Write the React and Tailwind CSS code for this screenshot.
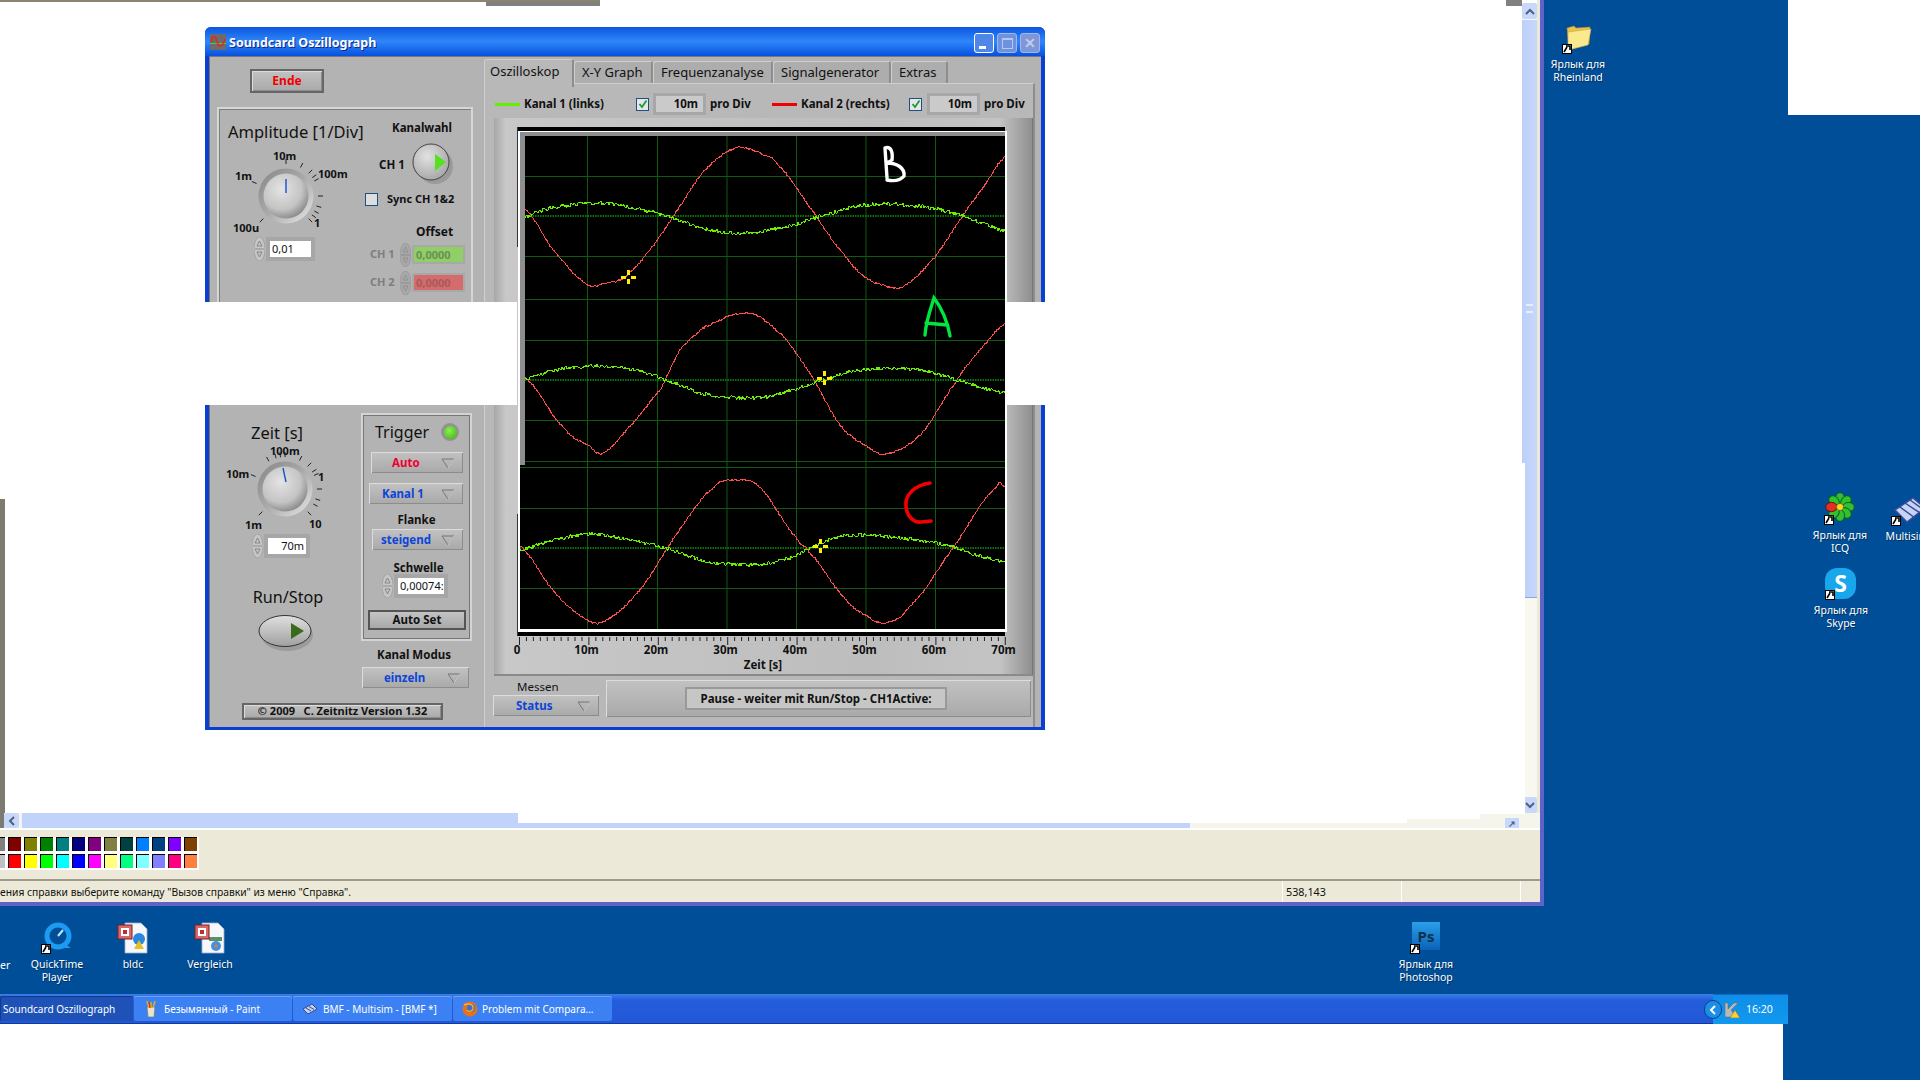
// Soundcard Oszillograph on the XP desktop, pasted over Paint
import React from "react";

const PANEL = "bg-[#b3b3b3]";
const RAISED =
  "bg-gradient-to-b from-[#c2c2c2] to-[#a9a9a9] shadow-[inset_1px_1px_0_#dcdcdc,inset_-1px_-1px_0_#8c8c8c]";

// small seeded noise so the traces keep the same shape on every load
const noise = (i) => {
  const v = Math.sin(i * 12.9898 + 4.1) * 43758.5453;
  return v - Math.floor(v) - 0.5;
};

const buildTrace = (anchors, amount, seed) => {
  const pts = [];
  for (let s = 0; s < anchors.length - 1; s++) {
    const p0 = anchors[Math.max(s - 1, 0)];
    const p1 = anchors[s];
    const p2 = anchors[s + 1];
    const p3 = anchors[Math.min(s + 2, anchors.length - 1)];
    const steps = Math.max(2, Math.round(p2[0] - p1[0]));
    for (let k = 0; k < steps; k++) {
      const t = k / steps;
      const t2 = t * t;
      const t3 = t2 * t;
      const x = p1[0] + (p2[0] - p1[0]) * t;
      const y =
        0.5 *
        (2 * p1[1] +
          (p2[1] - p0[1]) * t +
          (2 * p0[1] - 5 * p1[1] + 4 * p2[1] - p3[1]) * t2 +
          (3 * p1[1] - p0[1] - 3 * p2[1] + p3[1]) * t3);
      const n = noise(seed + pts.length) * amount;
      pts.push(`${x.toFixed(1)},${(y + n).toFixed(1)}`);
    }
  }
  const last = anchors[anchors.length - 1];
  pts.push(`${last[0]},${last[1]}`);
  return pts.join(" ");
};

const TRACES = [
  {
    red: [[525, 209], [553, 250], [587, 284], [602, 284], [625, 277], [650, 250], [673, 216], [705, 170], [736, 148], [760, 153], [778, 165], [816, 215], [840, 250], [865, 277], [891, 287], [905, 285], [935, 257], [962, 217], [985, 185], [1005, 157]],
    green: [[525, 217], [545, 209], [596, 203], [640, 209], [669, 217], [705, 229], [747, 233], [790, 226], [818, 217], [850, 208], [880, 204], [925, 207], [962, 215], [985, 224], [1005, 231]],
  },
  {
    red: [[525, 378], [564, 428], [590, 446], [602, 453], [629, 427], [662, 387], [680, 350], [705, 327], [749, 313], [785, 338], [814, 380], [840, 425], [865, 445], [885, 454], [920, 435], [956, 382], [980, 350], [1005, 324]],
    green: [[525, 379], [560, 369], [605, 366], [640, 371], [662, 379], [705, 394], [756, 398], [790, 391], [816, 382], [855, 371], [898, 368], [930, 372], [953, 379], [980, 387], [1005, 393]],
  },
  {
    red: [[520, 546], [553, 590], [580, 615], [602, 622], [640, 590], [676, 535], [713, 488], [738, 480], [760, 488], [796, 537], [809, 552], [844, 597], [865, 615], [885, 623], [909, 607], [953, 548], [996, 488], [1005, 486]],
    green: [[520, 550], [550, 541], [589, 534], [630, 540], [665, 548], [705, 561], [756, 565], [790, 558], [811, 548], [835, 538], [855, 535], [891, 537], [925, 541], [953, 547], [980, 556], [1005, 562]],
  },
];

const GRID_X = [587, 657, 726.5, 796, 865.5, 935];
const GRID_Y = [176, 256, 299, 340, 420, 461, 467, 508, 588];
const CENTER_Y = [216, 380, 548];
const AXIS = ["0", "10m", "20m", "30m", "40m", "50m", "60m", "70m"];

const Cursor = ({ x, y }) => (
  <g fill="#ffee00">
    <rect x={x - 1} y={y - 7} width="3" height="5" />
    <rect x={x - 1} y={y + 2} width="3" height="5" />
    <rect x={x - 7} y={y - 1} width="5" height="3" />
    <rect x={x + 3} y={y - 1} width="5" height="3" />
  </g>
);

const Plot = () => {
  const ticks = [];
  for (let i = 0; i <= 70; i++) ticks.push(i);
  return (
    <svg viewBox="510 127 520 545" className="w-[520px] h-[545px] block">
      <rect x="518" y="127" width="487" height="509" fill="#000" />
      <rect x="517" y="127" width="1" height="120" fill="#333" />
      <rect x="517" y="514" width="1" height="122" fill="#333" />
      <rect x="518" y="131" width="487" height="1" fill="#fff" />
      <rect x="518" y="131" width="2" height="501" fill="#fff" />
      <rect x="1005" y="131" width="2" height="501" fill="#fff" />
      <rect x="518" y="629" width="489" height="3" fill="#fff" />
      <rect x="520" y="132" width="485" height="4" fill="#8e8e8e" />
      <rect x="520" y="132" width="5" height="333" fill="#8e8e8e" />
      <rect x="520" y="133" width="2" height="2" fill="#5b8fe6" />
      {GRID_X.map((x) => (
        <rect key={x} x={x} y="136" width="1" height="493" fill="#0f5c0f" />
      ))}
      {GRID_Y.map((y) => (
        <rect key={y} x={y > 465 ? 520 : 525} y={y} width={y > 465 ? 485 : 480} height="1" fill="#0f5c0f" />
      ))}
      {CENTER_Y.map((y, i) => (
        <line key={y} x1={i == 2 ? 520 : 525} x2="1005" y1={y} y2={y} stroke="#0b9a0b" strokeWidth="1.5" strokeDasharray="1.5 1" />
      ))}
      {TRACES.map((t, i) => (
        <g key={i} fill="none" shapeRendering="crispEdges">
          <polyline points={buildTrace(t.red, 1.9, 100 + i * 700)} stroke="#ff4d4d" strokeWidth="1" />
          <polyline points={buildTrace(t.green, 3.6, 3000 + i * 700)} stroke="#6cf000" strokeWidth="1" />
        </g>
      ))}
      <Cursor x={628} y={277} />
      <Cursor x={824} y={378} />
      <Cursor x={820} y={546} />
      {/* hand drawn letters */}
      <path d="M885 148 L887 178 M885 148 C891 146 893 152 892 160 C888 163 887 162 887 163 C897 163 905 168 904 176 C900 181 892 181 887 180" fill="none" stroke="#fff" strokeWidth="3.4" strokeLinecap="round" />
      <path d="M925 335 C926 320 932 305 934 298 C941 307 948 322 950 336 M926 323 L947 325" fill="none" stroke="#00e640" strokeWidth="3.4" strokeLinecap="round" />
      <path d="M930 483 C915 485 905 495 906 505 C906 516 914 523 921 522 L931 521" fill="none" stroke="#f00000" strokeWidth="3.6" strokeLinecap="round" />
      {/* axis */}
      {ticks.map((i) => (
        <rect key={i} x={519 + i * 6.94} y="637" width="1" height={i % 10 == 0 ? 8 : 4} fill="#222" />
      ))}
      {AXIS.map((t, i) => (
        <text key={t} x={i == 0 ? 517 : 517 + i * 69.5} y="654" textAnchor="middle" fontSize="11.5" fontWeight="700" fill="#111" fontFamily="Noto Sans, sans-serif">
          {t}
        </text>
      ))}
      <text x="763" y="669" textAnchor="middle" fontSize="11.5" fontWeight="700" fill="#111" fontFamily="Noto Sans, sans-serif">
        Zeit [s]
      </text>
    </svg>
  );
};

// dial with ticks; pointer given relative to the centre
const Knob = ({ ticks, pointer, id }) => (
  <svg viewBox="-42 -42 84 84" className="w-[84px] h-[84px] block">
    <defs>
      <radialGradient id={id} cx="0.4" cy="0.35" r="0.75">
        <stop offset="0" stopColor="#e4e4e4" />
        <stop offset="0.6" stopColor="#c4c4c4" />
        <stop offset="1" stopColor="#777" />
      </radialGradient>
      <linearGradient id={id + "r"} x1="0" y1="0" x2="1" y2="1">
        <stop offset="0" stopColor="#868686" />
        <stop offset="0.5" stopColor="#aaa" />
        <stop offset="1" stopColor="#e8e8e8" />
      </linearGradient>
    </defs>
    {ticks.map((a) => {
      const r = (a * Math.PI) / 180;
      return (
        <line key={a} x1={Math.sin(r) * 32} y1={-Math.cos(r) * 32} x2={Math.sin(r) * 37} y2={-Math.cos(r) * 37} stroke="#222" strokeWidth="1" />
      );
    })}
    <circle r="27.5" fill={`url(#${id}r)`} />
    <circle r="22.5" fill={`url(#${id})`} />
    <line x1={pointer[0]} y1={pointer[1]} x2={pointer[2]} y2={pointer[3]} stroke="#1a4fd0" strokeWidth="1.4" />
  </svg>
);

const Spinner = ({ dim }) => (
  <svg viewBox="0 0 11 24" className="w-[11px] h-[24px] shrink-0">
    <ellipse cx="5.5" cy="12" rx="5.5" ry="12" fill={dim ? "#a8a8a8" : "#c6c6c6"} stroke="#929292" strokeWidth="0.6" />
    <line x1="1" y1="12" x2="10" y2="12" stroke="#8d8d8d" />
    <path d="M5.5 4 L8 9 L3 9 Z M5.5 20 L8 15 L3 15 Z" fill="none" stroke={dim ? "#8b8b8b" : "#777"} strokeWidth="0.8" />
  </svg>
);

const Numeric = ({ value, w, align, bg = "bg-white", text = "text-[#111]" }) => (
  <div className="flex items-center">
    <Spinner />
    <div className="ml-px p-[4px] bg-[#a6a6a6]">
      <div className={`${w} h-[16px] ${bg} ${text} ${align} text-[11px] leading-[16px] px-[2px] overflow-hidden whitespace-nowrap`}>
        {value}
      </div>
    </div>
  </div>
);

const OffsetRow = ({ label, bg, text }) => (
  <div className="flex items-center h-[24px]">
    <span className="w-[30px] ml-[5px] text-[#7e7e7e] font-bold text-[11px]">{label}</span>
    <Spinner dim />
    <div className="ml-px p-[2px] bg-[#a8a8a8]">
      <div className={`w-[49px] h-[15px] ${bg} ${text} font-bold text-[11px] leading-[15px] px-[2px]`}>0,0000</div>
    </div>
  </div>
);

const Combo = ({ label, color, w, ml, pad = "pl-[13px]", center }) => (
  <div className={`${w} ${ml} h-[21px] ${RAISED} flex items-center ${pad} relative`}>
    <span className={`${color} font-bold text-[11.5px] ${center}`}>{label}</span>
    <svg viewBox="0 0 14 11" className="absolute right-[8px] top-[6px] w-[14px] h-[11px]">
      <path d="M1 1 H13 L7 10 Z" fill="none" stroke="#777" strokeWidth="1" />
      <path d="M13 1 L7 10" stroke="#e4e4e4" strokeWidth="0.8" />
    </svg>
  </div>
);

const Tab = ({ label, active, w }) => (
  <div
    className={`${w} ${active ? "h-[28px] bg-[#b8b8b8] z-10 pl-[5px] pb-[3px]" : "h-[22px] mt-[2px] bg-[#adadad] pl-[7px] pt-[1px]"} rounded-t-[3px] border-t border-l border-[#cfcfcf] border-r-2 border-r-[#8d8d8d] flex items-center text-[13px] text-[#111] whitespace-nowrap`}
  >
    {label}
  </div>
);

const CheckBox = () => (
  <div className="w-[13px] h-[13px] border border-[#1d4f86] bg-[#e6e6e6] flex items-center justify-center">
    <svg viewBox="0 0 10 10" className="w-[10px] h-[10px]">
      <path d="M1.5 5 L4 8 L8.5 1.5" fill="none" stroke="#1c9a3a" strokeWidth="1.8" />
    </svg>
  </div>
);

const LegendField = () => (
  <div className="w-[53px] h-[22px] p-[3px] bg-[#a7a7a7]">
    <div className="h-full bg-[#cacaca] text-right pr-[5px] text-[11.5px] font-bold leading-[16px] text-[#111]">10m</div>
  </div>
);

const LeftPanel = () => (
  <div className="w-[275px] shrink-0 flex flex-col">
    <div className={`mt-[13px] ml-[41px] w-[74px] h-[24px] border-2 border-[#666] ${RAISED} flex items-center justify-center text-[#f00000] font-bold text-[12px]`}>
      Ende
    </div>
    {/* Amplitude group */}
    <div className="mt-[14px] ml-[8px] w-[256px] h-[298px] border-2 border-[#d6d6d6] shadow-[inset_1px_1px_0_#7f7f7f] flex">
      <div className="w-[146px] shrink-0 pl-[9px] pt-[13px]">
        <div className="text-[16.5px] leading-[20px] text-[#111] whitespace-nowrap">Amplitude [1/Div]</div>
        <div className="relative w-[140px] h-[95px]">
          <div className="absolute left-[16px] top-[12px]">
            <Knob id="amp" ticks={[-135, -67, 0, 27, 45, 55, 62, 90, 108, 118, 126, 135]} pointer={[0, -17, 0, -3]} />
          </div>
          <span className="absolute left-[45px] top-[6px] text-[11px] font-bold text-[#111]">10m</span>
          <span className="absolute left-[7px] top-[26px] text-[11px] font-bold text-[#111]">1m</span>
          <span className="absolute left-[90px] top-[24px] text-[11px] font-bold text-[#111]">100m</span>
          <span className="absolute left-[86px] top-[73px] text-[11px] font-bold text-[#111]">1</span>
          <span className="absolute left-[5px] top-[78px] text-[11px] font-bold text-[#111]">100u</span>
        </div>
        <div className="ml-[26px]">
          <Numeric value="0,01" w="w-[41px]" align="text-left" />
        </div>
      </div>
      <div className="flex-1 flex flex-col">
        <div className="mt-[11px] text-[11.5px] font-bold text-[#111] text-center leading-[16px] pl-[8px]">Kanalwahl</div>
        <div className="mt-[8px] flex items-center h-[40px] ml-[14px]">
          <span className="text-[11.5px] font-bold text-[#111] mt-[2px]">CH 1</span>
          <svg viewBox="0 0 44 44" className="w-[44px] h-[44px] ml-[6px]">
            <defs>
              <radialGradient id="tog" cx="0.4" cy="0.35" r="0.8">
                <stop offset="0" stopColor="#e2e2e2" />
                <stop offset="1" stopColor="#9c9c9c" />
              </radialGradient>
            </defs>
            <circle cx="24" cy="24" r="18" fill="#9a9a9a" />
            <circle cx="20" cy="20" r="18" fill="url(#tog)" stroke="#444" strokeWidth="1" />
            <path d="M24 12 L35 20 L24 29 Z" fill="#55e020" />
          </svg>
        </div>
        <div className="mt-[7px] flex items-center">
          <div className="w-[13px] h-[13px] border border-[#1d4f86] bg-[#dedede]" />
          <span className="ml-[9px] text-[11px] font-bold text-[#111] whitespace-nowrap">Sync CH 1&amp;2</span>
        </div>
        <div className="mt-[15px] ml-[51px] text-[12px] font-bold text-[#111] leading-[18px]">Offset</div>
        <div className="mt-[2px]">
          <OffsetRow label="CH 1" bg="bg-[#8fcf66]" text="text-[#6b8f55]" />
        </div>
        <div className="mt-[4px]">
          <OffsetRow label="CH 2" bg="bg-[#d56c6c]" text="text-[#a85a5a]" />
        </div>
      </div>
    </div>
    {/* Time and trigger */}
    <div className="mt-[8px] flex ml-[8px]">
      <div className="w-[144px] shrink-0 flex flex-col items-center">
        <div className="mt-[10px] text-[16.5px] leading-[20px] text-[#111] ml-[-24px]">Zeit [s]</div>
        <div className="relative w-[140px] h-[91px] mt-[0px]">
          <div className="absolute left-[24px] top-[4px]">
            <Knob id="zeit" ticks={[-135, -67, -30, -16, -8, 0, 27, 45, 58, 65, 90, 108, 118, 135]} pointer={[-2, -21, 1, -7]} />
          </div>
          <span className="absolute left-[51px] top-[0px] text-[11px] font-bold text-[#111]">100m</span>
          <span className="absolute left-[7px] top-[23px] text-[11px] font-bold text-[#111]">10m</span>
          <span className="absolute left-[99px] top-[26px] text-[11px] font-bold text-[#111]">1</span>
          <span className="absolute left-[26px] top-[74px] text-[11px] font-bold text-[#111]">1m</span>
          <span className="absolute left-[90px] top-[73px] text-[11px] font-bold text-[#111]">10</span>
        </div>
        <div className="-ml-[16px]">
          <Numeric value="70m" w="w-[38px]" align="text-right" />
        </div>
        <div className="mt-[29px] text-[16.2px] leading-[20px] text-[#111] ml-[-2px]">Run/Stop</div>
        <svg viewBox="0 0 60 38" className="w-[60px] h-[38px] mt-[7px] -ml-[2px]">
          <defs>
            <linearGradient id="run" x1="0" y1="0" x2="0" y2="1">
              <stop offset="0" stopColor="#e0e0e0" />
              <stop offset="1" stopColor="#a0a0a0" />
            </linearGradient>
          </defs>
          <ellipse cx="29" cy="21" rx="26" ry="16" fill="#9b9b9b" />
          <ellipse cx="27" cy="17" rx="26" ry="15.5" fill="url(#run)" stroke="#333" strokeWidth="1" />
          <path d="M33 9 L46 17 L33 25 Z" fill="#3c6b1c" />
        </svg>
      </div>
      <div className="w-[112px]">
        <div className="w-[111px] h-[228px] border-2 border-[#d4d4d4] shadow-[0_0_0_1px_#777_inset] flex flex-col">
          <div className="mt-[7px] h-[20px] flex items-center pl-[12px]">
            <span className="text-[16px] text-[#111]">Trigger</span>
            <span className="ml-[12px] w-[18px] h-[18px] rounded-full bg-[#929292] flex items-center justify-center">
              <span className="w-[13px] h-[13px] rounded-full bg-[radial-gradient(circle_at_40%_35%,#8cf050,#3bb010)]" />
            </span>
          </div>
          <div className="mt-[10px]">
            <Combo label="Auto" color="text-[#f00030]" w="w-[92px]" ml="ml-[8px]" pad="pl-[21px]" />
          </div>
          <div className="mt-[10px]">
            <Combo label="Kanal 1" color="text-[#0c45d8]" w="w-[94px]" ml="ml-[6px]" />
          </div>
          <div className="mt-[8px] text-center text-[11.5px] font-bold text-[#111] leading-[16px]">Flanke</div>
          <div className="mt-[1px]">
            <Combo label="steigend" color="text-[#0c45d8]" w="w-[91px]" ml="ml-[9px]" pad="pl-[9px]" />
          </div>
          <div className="mt-[10px] text-center text-[11.5px] font-bold text-[#111] leading-[16px] pl-[4px]">Schwelle</div>
          <div className="ml-[19px] -mt-[2px]">
            <Numeric value="0,00074:" w="w-[46px]" align="text-left" />
          </div>
          <div className="mt-[12px] ml-[5px] w-[98px] h-[20px] border-2 border-[#555] bg-gradient-to-b from-[#c4c4c4] to-[#a8a8a8] flex items-center justify-center text-[11.5px] font-bold text-[#111]">
            Auto Set
          </div>
        </div>
        <div className="mt-[6px] text-center text-[11.5px] font-bold text-[#111] leading-[16px] pr-[6px]">Kanal Modus</div>
        <div className="mt-[4px]">
          <Combo label="einzeln" color="text-[#0c45d8]" w="w-[107px]" ml="ml-[1px]" pad="pl-[22px]" />
        </div>
      </div>
    </div>
    <div className={`mt-[15px] ml-[33px] w-[201px] h-[17px] border-2 border-[#666] ${RAISED} flex items-center justify-center text-[11px] font-bold text-[#111] whitespace-pre`}>
      {"© 2009   C. Zeitnitz Version 1.32"}
    </div>
  </div>
);

const RightPanel = () => (
  <div className="flex-1 flex flex-col pt-[3px] pr-[6px]">
    <div className="flex h-[24px]">
      <Tab label="Oszilloskop" active w="w-[90px]" />
      <Tab label="X-Y Graph" w="w-[79px]" />
      <Tab label="Frequenzanalyse" w="w-[120px]" />
      <Tab label="Signalgenerator" w="w-[118px]" />
      <Tab label="Extras" w="w-[57px]" />
    </div>
    <div className="h-[644px] bg-[#b8b8b8] border-t border-[#cfcfcf] border-r-2 border-r-[#8d8d8d] shadow-[inset_1px_0_0_#cfcfcf] flex flex-col">
      <div className="mt-[9px] h-[22px] flex items-center text-[11.5px] font-bold text-[#111] whitespace-nowrap">
        <span className="ml-[11px] w-[25px] h-[3px] bg-[#66ee00]" />
        <span className="ml-[4px] w-[112px]">Kanal 1 (links)</span>
        <CheckBox />
        <span className="ml-[4px]"><LegendField /></span>
        <span className="ml-[4px] w-[62px]">pro Div</span>
        <span className="w-[25px] h-[3px] bg-[#f00000]" />
        <span className="ml-[4px] w-[108px]">Kanal 2 (rechts)</span>
        <CheckBox />
        <span className="ml-[5px]"><LegendField /></span>
        <span className="ml-[4px]">pro Div</span>
      </div>
      <div className="mt-[3px] ml-[10px] w-[539px] h-[558px] bg-[linear-gradient(90deg,#a8a8a8,#c8c8c8_12px,#bdbdbd_70%,#c4c4c4_94%,#8f8f8f)] border-b-2 border-b-[#8a8a8a] border-r border-r-[#777] pt-[9px] pl-[16px]">
        <Plot />
      </div>
      <div className="flex mt-[4px] ml-[9px]">
        <div className="w-[106px] shrink-0">
          <div className="ml-[24px] text-[11.5px] leading-[14px] h-[15px] text-[#111]">Messen</div>
          <Combo label="Status" color="text-[#0c45d8]" w="w-[106px]" ml="" pad="pl-[23px]" />
        </div>
        <div className={`ml-[7px] w-[425px] h-[37px] ${RAISED} flex items-center pl-[79px]`}>
          <div className="w-[262px] h-[23px] bg-[#c6c6c6] border-2 border-[#999] flex items-center justify-center text-[11.5px] font-bold text-[#111] whitespace-nowrap">
            Pause - weiter mit Run/Stop - CH1Active:
          </div>
        </div>
      </div>
    </div>
  </div>
);

const Oscillograph = () => (
  <div className="absolute left-[205px] top-[27px] w-[840px] h-[703px] flex flex-col bg-[#0a3fd4] rounded-t-[6px] overflow-hidden font-['Noto_Sans',sans-serif]">
    <div className="h-[29px] shrink-0 flex items-center bg-gradient-to-b from-[#0d55e0] via-[#2f86f8] to-[#0a4fe0] relative">
      <svg viewBox="0 0 16 16" className="ml-[5px] w-[16px] h-[16px]">
        <rect width="16" height="16" fill="#6c6c6c" />
        <rect y="9" width="16" height="1" fill="#40d040" />
        <path d="M1 8 C3 0 5 0 7 8 C9 14 12 14 15 5" fill="none" stroke="#f02020" strokeWidth="1.4" />
      </svg>
      <span className="ml-[3px] mt-[3px] text-white font-bold text-[12.5px] [text-shadow:1px_1px_0_#0a2a90]">Soundcard Oszillograph</span>
      <div className="absolute right-[5px] top-[6px] flex gap-[3px]">
        <div className="w-[20px] h-[20px] rounded-[3px] border border-white bg-[#4f86e8] flex items-end pl-[4px] pb-[3px]">
          <span className="w-[7px] h-[3px] bg-white" />
        </div>
        <div className="w-[20px] h-[20px] rounded-[3px] border border-[#9cb8ee] bg-[#6d93e0] flex items-center justify-center">
          <span className="w-[11px] h-[11px] border border-[#b8c8e8] border-t-2" />
        </div>
        <div className="w-[20px] h-[20px] rounded-[3px] border border-[#9cb8ee] bg-[#7f97d8] flex items-center justify-center text-[#c2cde6] font-bold text-[14px] leading-none">
          ✕
        </div>
      </div>
    </div>
    <div className={`flex-1 mx-[4px] mb-[3px] ${PANEL} shadow-[inset_1px_1px_0_#777] flex`}>
      <LeftPanel />
      <RightPanel />
    </div>
  </div>
);

const SWATCHES = [
  ["#808080", "#800000", "#808000", "#008000", "#008080", "#000080", "#800080", "#808040", "#004040", "#0080ff", "#004080", "#8000ff", "#804000"],
  ["#c0c0c0", "#ff0000", "#ffff00", "#00ff00", "#00ffff", "#0000ff", "#ff00ff", "#ffff80", "#00ff80", "#80ffff", "#8080ff", "#ff0080", "#ff8040"],
];

const PaintWindow = () => (
  <div className="w-[1544px] h-[906px] shrink-0 flex flex-col bg-[#ece9d8] border-r-4 border-b-4 border-[#5f62c6] font-['Noto_Sans',sans-serif]">
    {/* canvas + vertical scrollbar */}
    <div className="flex h-[813px]">
      <div className="flex-1 bg-white relative">
        <div className="h-[2px] w-[600px] bg-[#8a8470]" />
        <div className="h-[4px] w-[114px] ml-[486px] bg-[#808080]" />
        <div className="absolute left-[1506px] top-0 w-[16px] h-[6px] bg-[#808080]" />
        <div className="absolute left-0 top-[499px] w-[5px] h-[314px] bg-[#7d7b70]" />
        <div className="absolute left-[1522px] top-[463px] w-[3px] h-[350px] bg-white z-10" />
      </div>
      <div className="w-[15px] flex flex-col bg-[#f8f8f0]">
        <div className="h-[3px] bg-white" />
        <div className="h-[16px] bg-[#c8d8fb] rounded-[2px] flex items-center justify-center text-[#4d6185]">
          <svg viewBox="0 0 10 7" className="w-[10px] h-[7px]"><path d="M1 6 L5 2 L9 6" fill="none" stroke="currentColor" strokeWidth="2" /></svg>
        </div>
        <div className="h-[578px] mt-[1px] bg-gradient-to-r from-[#bccff8] to-[#c8d8fb] border-b border-[#8fa6d8] flex items-center justify-center">
          <div className="w-[7px] h-[9px] border-y-2 border-[#e8eefc]" />
        </div>
        <div className="flex-1" />
        <div className="h-[16px] bg-[#c8d8fb] rounded-[2px] flex items-center justify-center text-[#4d6185]">
          <svg viewBox="0 0 10 7" className="w-[10px] h-[7px]"><path d="M1 1 L5 5 L9 1" fill="none" stroke="currentColor" strokeWidth="2" /></svg>
        </div>
      </div>
      <div className="w-[3px] bg-[#ece9d8]" />
    </div>
    {/* horizontal scrollbar, half painted over */}
    <div className="h-[15px] bg-[#f6f5ec] flex relative">
      <div className="w-[4px] bg-[#7d7b70]" />
      <div className="w-[15px] h-[15px] bg-[#c8d8fb] rounded-[2px] flex items-center justify-center text-[#4d6185]">
        <svg viewBox="0 0 7 10" className="w-[7px] h-[10px]"><path d="M6 1 L2 5 L6 9" fill="none" stroke="currentColor" strokeWidth="2" /></svg>
      </div>
      <div className="ml-[3px] w-[1168px] h-[15px] bg-[#c1d3fb]">
        <div className="ml-[496px] h-[10px] bg-white" />
      </div>
      <div className="w-[217px] h-[10px] bg-white" />
      <div className="w-[73px] h-[6px] bg-white" />
      <div className="w-[45px] h-[1px] bg-white" />
      <div className="absolute left-[1505px] top-[5px] w-[14px] h-[10px] bg-[#c8d8fb] flex items-center justify-center text-[#4d6185] text-[9px] leading-none font-bold">↗</div>
    </div>
    <div className="h-[2px] bg-white" />
    {/* colour box */}
    <div className="h-[49px] pt-[7px]">
      <div className="w-[199px] h-[33px] bg-white flex flex-col gap-[3px] overflow-hidden">
        {SWATCHES.map((row, r) => (
          <div key={r} className="flex gap-[3px] -ml-[8px]">
            {row.map((c) => (
              <div key={c} className="w-[13px] h-[14px] border-t border-l border-black" style={{ backgroundColor: c }} />
            ))}
          </div>
        ))}
      </div>
    </div>
    {/* status bar */}
    <div className="flex-1 border-t-2 border-t-[#9d9a8c] flex items-center text-[10.3px] text-[#111]">
      <div className="w-[1282px] mt-[2px] overflow-hidden whitespace-nowrap">ения справки выберите команду "Вызов справки" из меню "Справка".</div>
      <div className="w-[119px] h-full border-l border-[#fff] pl-[3px] pt-[2px] flex items-center text-[10.8px]">538,143</div>
      <div className="w-[119px] h-full border-l border-[#fff]" />
      <div className="flex-1 h-full border-l border-[#fff]" />
    </div>
  </div>
);

const ShortcutArrow = () => (
  <span className="absolute left-0 bottom-0 w-[10px] h-[10px] bg-white border border-black flex items-center justify-center">
    <svg viewBox="0 0 8 8" className="w-[8px] h-[8px]"><path d="M1 7 L4 2 M3 1 H7 V5" fill="none" stroke="#000" strokeWidth="1.6" /></svg>
  </span>
);

// desktop icon: picture plus caption, placed on the free desktop canvas
const DesktopIcon = ({ pos, lines, shortcut = true, children }) => (
  <div className={`absolute ${pos} w-[80px] flex flex-col items-center text-white text-[10.5px] leading-[12.5px] font-['Noto_Sans',sans-serif] [text-shadow:1px_1px_0_#00305f]`}>
    <div className="relative w-[32px] h-[32px]">
      {children}
      {shortcut && <ShortcutArrow />}
    </div>
    <div className="mt-[4px] text-center whitespace-nowrap">
      {lines.map((l) => (
        <div key={l}>{l}</div>
      ))}
    </div>
  </div>
);

const PptDoc = ({ children }) => (
  <svg viewBox="0 0 32 32" className="w-[32px] h-[32px]">
    <path d="M8 1 H24 L30 7 V31 H8 Z" fill="#f4f7fb" stroke="#9fb0c6" strokeWidth="0.8" />
    {children}
    <rect x="1" y="3" width="14" height="14" fill="#d9686a" stroke="#7c2024" strokeWidth="1" />
    <rect x="4" y="6" width="8" height="8" fill="#fff" />
    <rect x="6" y="8" width="4" height="4" fill="#b73035" />
  </svg>
);

const TaskButton = ({ w, active, icon, children }) => (
  <div className={`${w} h-[25px] shrink-0 rounded-[2px] flex items-center text-white text-[10px] whitespace-nowrap ${active ? "bg-[#1e52b7] shadow-[inset_1px_1px_1px_#123a8a]" : "bg-[#3c81f3] shadow-[inset_0_1px_0_#6ca0f8]"}`}>
    {icon}
    {children}
  </div>
);

export default function App() {
  return (
    <div className="relative w-[1920px] h-[1080px] overflow-hidden bg-white flex flex-col">
      <div className="h-[906px] flex shrink-0">
        <PaintWindow />
        <div className="flex-1 bg-[#004e98] relative">
          <div className="absolute right-0 top-0 w-[132px] h-[115px] bg-white" />
        </div>
      </div>
      <div className="h-[88px] shrink-0 bg-[#004e98]" />
      {/* taskbar */}
      <div className="h-[30px] shrink-0 flex">
        <div className="w-[1713px] bg-gradient-to-b from-[#3c7ee8] via-[#245edc] via-20% to-[#2157d7] border-b border-[#123a9c] flex items-center gap-[1px] font-['Noto_Sans',sans-serif]">
          <TaskButton w="w-[133px]" active>
            <span className="ml-[3px] mt-[2px]">Soundcard Oszillograph</span>
          </TaskButton>
          <TaskButton
            w="w-[158px]"
            icon={
              <svg viewBox="0 0 14 16" className="ml-[10px] w-[14px] h-[16px]">
                <path d="M3 6 H11 L10 16 H4 Z" fill="#e8e4d0" stroke="#7b6a40" strokeWidth="0.6" />
                <path d="M5 7 L3 0 M7 7 V1 M9 7 L11 0" stroke="#e0b020" strokeWidth="1.5" />
                <path d="M6 7 L5 1" stroke="#d03020" strokeWidth="1.2" />
              </svg>
            }
          >
            <span className="ml-[6px] mt-[1px]">Безымянный - Paint</span>
          </TaskButton>
          <TaskButton
            w="w-[159px]"
            icon={
              <svg viewBox="0 0 16 12" className="ml-[9px] w-[16px] h-[12px]">
                <path d="M1 6 L10 1 L15 6 L6 11 Z" fill="#c4d0f0" stroke="#3a4a90" strokeWidth="1" />
                <path d="M4 5 L9 8 M7 3.5 L12 6.5" stroke="#3a4a90" strokeWidth="1" />
              </svg>
            }
          >
            <span className="ml-[5px] mt-[1px]">BMF - Multisim - [BMF *]</span>
          </TaskButton>
          <TaskButton
            w="w-[159px]"
            icon={
              <svg viewBox="0 0 16 16" className="ml-[9px] w-[16px] h-[16px]">
                <circle cx="8" cy="8" r="7.5" fill="#e87018" />
                <circle cx="9" cy="7" r="4" fill="#3a6fd0" />
                <path d="M2 4 C6 2 12 3 11 8 C10 11 6 11 5 9" fill="none" stroke="#f7b030" strokeWidth="1.4" />
              </svg>
            }
          >
            <span className="ml-[4px] mt-[1px]">Problem mit Compara...</span>
          </TaskButton>
        </div>
        <div className="w-[75px] bg-gradient-to-b from-[#0f8ee8] to-[#1199ee] border-t border-[#0a6ad0] flex items-center text-white text-[10.5px] relative font-['Noto_Sans',sans-serif]">
          <span className="absolute left-[-9px] top-[5px] w-[18px] h-[19px] rounded-full bg-[#1a8fe8] border border-[#10408c] flex items-center justify-center">
            <svg viewBox="0 0 8 10" className="w-[8px] h-[10px]"><path d="M6 1 L2 5 L6 9" fill="none" stroke="#fff" strokeWidth="2" /></svg>
          </span>
          <svg viewBox="0 0 16 16" className="ml-[11px] w-[16px] h-[16px]">
            <path d="M1 1 H4 V7 L10 1 H14 L7 8 L12 15 H1 Z" fill="#b8b8b8" stroke="#666" strokeWidth="0.5" />
            <path d="M11 8 L16 16 H6 Z" fill="#f6d040" stroke="#7a6010" strokeWidth="0.5" />
          </svg>
          <span className="ml-[6px]">16:20</span>
        </div>
        <div className="flex-1 bg-[#004e98]" />
      </div>
      <div className="flex-1 flex">
        <div className="w-[1783px] bg-white" />
        <div className="flex-1 bg-[#004e98]" />
      </div>

      <Oscillograph />

      {/* leftovers of a selection pasted over the window */}
      <div className="absolute left-[205px] top-[302px] w-[312px] h-[103px] bg-white" />
      <div className="absolute left-[1007px] top-[302px] w-[38px] h-[103px] bg-white" />

      {/* desktop icons */}
      <DesktopIcon pos="left-[1538px] top-[22px]" lines={["Ярлык для", "Rheinland"]}>
        <svg viewBox="0 0 32 32" className="w-[32px] h-[32px]">
          <path d="M5 6 L12 4 L14 6 L28 5 L27 22 L7 28 Z" fill="#e8c44c" stroke="#a8842c" strokeWidth="0.6" />
          <path d="M6 10 L29 7 L26 23 L6 28 Z" fill="#fbe98e" stroke="#c8a848" strokeWidth="0.6" />
        </svg>
      </DesktopIcon>
      <DesktopIcon pos="left-[1800px] top-[493px]" lines={["Ярлык для", "ICQ"]}>
        <svg viewBox="0 0 32 32" className="w-[32px] h-[32px]">
          {[0, 45, 90, 135, 180, 315].map((a) => (
            <ellipse key={a} cx="16" cy="5.5" rx="4.6" ry="5.8" fill="#30c030" stroke="#0c5a1c" strokeWidth="1" transform={`rotate(${a} 16 14)`} />
          ))}
          {[225, 270].map((a) => (
            <ellipse key={a} cx="16" cy="5.5" rx="4.6" ry="5.8" fill={a == 270 ? "#e03020" : "#30c030"} stroke={a == 270 ? "#6a1010" : "#0c5a1c"} strokeWidth="1" transform={`rotate(${a} 16 14)`} />
          ))}
          <circle cx="16" cy="14" r="3.5" fill="#f8d820" stroke="#705010" strokeWidth="0.6" />
        </svg>
      </DesktopIcon>
      <DesktopIcon pos="left-[1801px] top-[568px]" lines={["Ярлык для", "Skype"]}>
        <div className="w-[31px] h-[31px] rounded-[12px] bg-[#19a7ec] flex items-center justify-center text-white text-[23px] font-bold leading-none [text-shadow:none]">S</div>
      </DesktopIcon>
      <DesktopIcon pos="left-[1867px] top-[494px]" lines={["Multisim"]}>
        <svg viewBox="0 0 32 32" className="w-[32px] h-[32px]">
          <path d="M4 16 L22 4 L34 14 L16 28 Z" fill="#c8d4f4" stroke="#3a4a9c" strokeWidth="1.5" />
          <path d="M9 13 L24 24 M14 9 L29 19 M19 6 L33 16" stroke="#3a4a9c" strokeWidth="1.5" />
        </svg>
      </DesktopIcon>
      <DesktopIcon pos="left-[17px] top-[922px]" lines={["QuickTime", "Player"]}>
        <svg viewBox="0 0 32 32" className="w-[32px] h-[32px]">
          <circle cx="17" cy="14" r="11" fill="none" stroke="#1c9cf0" strokeWidth="5" />
          <path d="M17 14 L22 8" stroke="#bfe6ff" strokeWidth="2" />
          <path d="M24 22 L30 26 H22 Z" fill="#1c9cf0" />
        </svg>
      </DesktopIcon>
      <DesktopIcon pos="left-[93px] top-[922px]" lines={["bldc"]} shortcut={false}>
        <PptDoc>
          <circle cx="22" cy="17" r="6" fill="#2a88e0" />
          <path d="M17 27 L22 18 L27 27 Z" fill="#e8c020" />
        </PptDoc>
      </DesktopIcon>
      <DesktopIcon pos="left-[170px] top-[922px]" lines={["Vergleich"]} shortcut={false}>
        <PptDoc>
          <path d="M15 15 H28 V19 H15 Z" fill="#5b9060" />
          <circle cx="22" cy="24" r="5" fill="#4a8fdc" />
          <circle cx="22" cy="24" r="1.4" fill="#e88020" />
        </PptDoc>
      </DesktopIcon>
      <DesktopIcon pos="left-[1386px] top-[922px]" lines={["Ярлык для", "Photoshop"]}>
        <div className="ml-[2px] w-[28px] h-[28px] bg-gradient-to-b from-[#2ba0e8] to-[#0a62b8] flex items-center justify-center text-[#10304c] font-bold text-[15px] leading-none [text-shadow:none]">Ps</div>
      </DesktopIcon>
      <div className="absolute left-0 top-[959px] text-white text-[10.5px] leading-[12.5px] font-['Noto_Sans',sans-serif]">er</div>
    </div>
  );
}
